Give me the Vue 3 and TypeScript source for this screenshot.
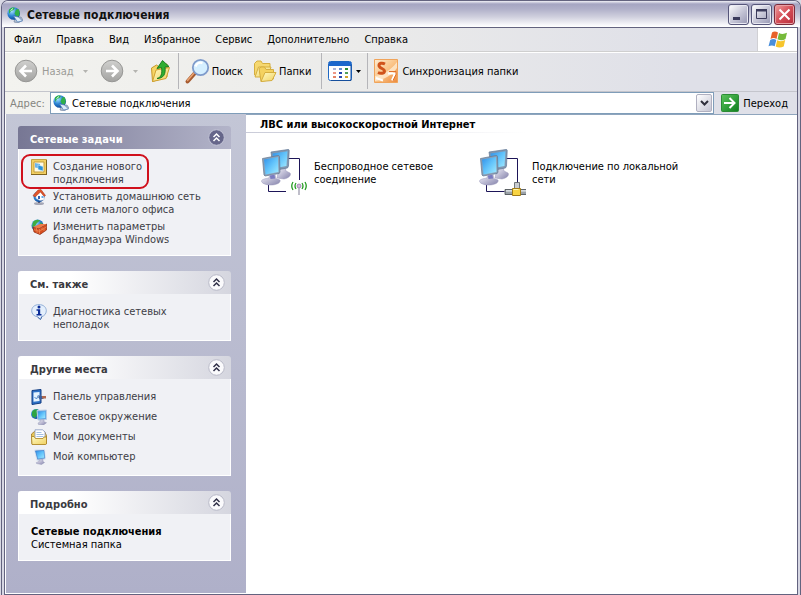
<script setup lang="ts">
import { ref } from 'vue'

interface Task { icon: string; text: string }
interface Panel { title: string; primary?: boolean; tasks: Task[]; marked?: number }

const menu: string[] = ['Файл', 'Правка', 'Вид', 'Избранное', 'Сервис', 'Дополнительно', 'Справка']
const address = ref('Сетевые подключения')

const panels: Panel[] = [
  {
    title: 'Сетевые задачи',
    primary: true,
    marked: 0,
    tasks: [
      { icon: 'wizard', text: 'Создание нового\nподключения' },
      { icon: 'home', text: 'Установить домашнюю сеть\nили сеть малого офиса' },
      { icon: 'firewall', text: 'Изменить параметры\nбрандмауэра Windows' },
    ],
  },
  { title: 'См. также', tasks: [{ icon: 'info', text: 'Диагностика сетевых\nнеполадок' }] },
  {
    title: 'Другие места',
    tasks: [
      { icon: 'control', text: 'Панель управления' },
      { icon: 'places', text: 'Сетевое окружение' },
      { icon: 'documents', text: 'Мои документы' },
      { icon: 'computer', text: 'Мой компьютер' },
    ],
  },
  { title: 'Подробно', tasks: [] },
]

const connections: Task[] = [
  { icon: 'wireless', text: 'Беспроводное сетевое\nсоединение' },
  { icon: 'lan', text: 'Подключение по локальной\nсети' },
]
</script>

<template>
  <div class="window">
    <svg class="defs" aria-hidden="true">
      <defs>
        <linearGradient id="screen" x1="0" y1="0" x2="1" y2="1">
          <stop offset="0" stop-color="#2f8fe8" /><stop offset=".5" stop-color="#63c4fb" /><stop offset="1" stop-color="#a5ecff" />
        </linearGradient>
        <linearGradient id="stand" x1="0" y1="0" x2="1" y2="1">
          <stop offset="0" stop-color="#f4f3fa" /><stop offset="1" stop-color="#8583ac" />
        </linearGradient>
        <radialGradient id="globeFill" cx=".35" cy=".3" r=".8">
          <stop offset="0" stop-color="#a8e4ff" /><stop offset=".5" stop-color="#2a83d4" /><stop offset="1" stop-color="#0a3c8c" />
        </radialGradient>
        <linearGradient id="folderFill" x1="0" y1="0" x2="1" y2="1">
          <stop offset="0" stop-color="#fffbc4" /><stop offset="1" stop-color="#f0d060" />
        </linearGradient>
        <linearGradient id="greyBall" x1="0" y1="0" x2="0" y2="1">
          <stop offset="0" stop-color="#d0d0ce" /><stop offset="1" stop-color="#a3a3a1" />
        </linearGradient>
        <linearGradient id="greenFill" x1="0" y1="0" x2="1" y2="1">
          <stop offset="0" stop-color="#5cc45c" /><stop offset="1" stop-color="#0e7f1e" />
        </linearGradient>
        <linearGradient id="orangeFill" x1="0" y1="0" x2="1" y2="1">
          <stop offset="0" stop-color="#fdeed4" /><stop offset=".5" stop-color="#fac386" /><stop offset="1" stop-color="#ec8a3c" />
        </linearGradient>
      </defs>

      <symbol id="globe" viewBox="0 0 16 16">
        <path d="M8 11l6-1 2 3-5 3-4-1z" fill="#aebcd0" stroke="#6c7c98" stroke-width=".6" />
        <circle cx="6.700" cy="6.500" r="6.300" fill="url(#globeFill)" />
        <path d="M2 2.500C4 0 7 0 8 1L6.500 3 4 4 2 7zM9 2.500l2.500-.5C13 5 13 7 11.500 9.500L9 9 7.500 6.500z" fill="#2fb04a" />
        <path d="M3.500 3.500l2.500-2" stroke="#e0ffe4" />
        <path d="M6.500 9l5 1 4 4-5 1z" fill="#ddecfa" stroke="#507bb6" stroke-width=".7" />
      </symbol>

      <symbol id="wizard" viewBox="0 0 16 16">
        <path d="M.5.5h15v15H.5z" fill="#f2cf62" stroke="#c4a244" />
        <path d="M3 3h10v10H3z" fill="#fffbe4" stroke="#c39d3c" />
        <path d="M4 4l5 1v4.500l-5-1z" fill="#6db5ec" /><path d="M7 6l5 1.500v4.500L7 10.500z" fill="#2b92d8" stroke="#c8e8fc" stroke-width=".6" />
        <path d="M0 15.500h16M15.500 1v15" stroke="#806420" />
      </symbol>

      <symbol id="home" viewBox="0 0 16 16">
        <ellipse cx="8" cy="14.500" rx="5" ry="1.500" fill="#a5a7b6" />
        <path d="M7 11h2v3H7z" fill="#5a5c78" />
        <circle cx="8" cy="7.500" r="5.500" fill="url(#globeFill)" />
        <path d="M5 6l4-4 4 4.500V11L9 11.500 5 9.500z" fill="#fff" stroke="#a6b4cc" stroke-width=".5" />
        <path d="M2 6.500L7 1l3-.5 4.500 6-1.500.8L9.500 3 4 8z" fill="#e2552a" stroke="#a42c12" stroke-width=".5" />
        <path d="M7 7h2v3H7z" fill="#365fae" /><path d="M10.500 7h2v2h-2z" fill="#5fa8ea" />
      </symbol>

      <symbol id="firewall" viewBox="0 0 16 16">
        <circle cx="6.500" cy="6.500" r="6" fill="url(#globeFill)" />
        <path d="M2 3C4 .5 7 0 9 1.500L6 4 4 7 1 8zM9 3l3 2-2 2z" fill="#3fae42" />
        <path d="M2 8l6 1.500L15.500 5v6L9 15.500 3 13z" fill="#d74e20" stroke="#8b2409" stroke-width=".7" />
        <path d="M2 8l7-3 6.500 0L8 9.500z" fill="#ee7c48" />
        <path d="M3 10.700l5.500 1.600 7-4.500M8.500 10v5M5.500 9v2M6 11.500v2.500M11 8.500V11M13 9.500V12" stroke="#f09a68" stroke-width=".6" fill="none" />
      </symbol>

      <symbol id="info" viewBox="0 0 16 16">
        <path d="M8 .6c4.500 0 7.300 2.700 7.300 6.200 0 3-2 5.200-4.800 5.900L9.500 15.500 6.500 12.800C3 12.300.7 10 .7 6.800.7 3.300 3.500.6 8 .6z" fill="#e4effc" stroke="#91aed6" />
        <path d="M11 12.500l-1.500 3L6.500 13" fill="none" stroke="#4b71ac" />
        <circle cx="8" cy="3" r="1.500" fill="#0b2d98" />
        <path d="M5.500 5.200h3.700v4.800h1.300v1.500h-5V10h1.500V6.700H5.500z" fill="#0b2d98" />
      </symbol>

      <symbol id="control" viewBox="0 0 16 16">
        <path d="M1 1.500l9-1v13.500L1 15.500z" fill="#2e73c8" stroke="#123d82" />
        <path d="M2.500 3.500L8.500 3v9l-6 .8z" fill="#e5f3ff" />
        <path d="M3.500 8l2 2 2-4" stroke="#4e88cc" fill="none" />
        <path d="M7 8l3-3v2h2.500v3H10v2z" fill="#3e5f98" /><path d="M11 7h4v2.500h-4z" fill="#b06a50" />
      </symbol>

      <symbol id="places" viewBox="0 0 16 16">
        <circle cx="5" cy="5" r="5" fill="url(#globeFill)" />
        <path d="M1 2.500C3 0 6-.2 7 1L6 6 4 9 1 7z" fill="#2da443" />
        <path d="M6 1.500L15.500 1v9.500L7 11z" fill="#5fa4e1" stroke="#b8cbe4" />
        <path d="M7.200 2.800l7-.4v6.700l-6.500.6z" fill="url(#screen)" />
        <path d="M9 11l4-.3v2l2.500 1-3 2.300-5-.5-.5-1.500L9 13z" fill="url(#stand)" stroke="#8489ac" stroke-width=".4" />
      </symbol>

      <symbol id="documents" viewBox="0 0 16 16">
        <path d="M.5 5l3-2.500h10l2 4v8.500H1z" fill="#e9c95a" stroke="#9e7420" stroke-width=".8" />
        <path d="M4 .8h7.500L14 3v9H4z" fill="#fff" stroke="#8598c0" stroke-width=".8" />
        <path d="M5.500 3.500h5M5.500 5.500h7M5.500 7.500h7" stroke="#8db0dc" stroke-width=".8" />
        <path d="M.5 7.500H3l1.500 2h7.500l1-1.500h2.500v6.500l-1 1H1z" fill="url(#folderFill)" stroke="#aa8220" stroke-width=".8" />
      </symbol>

      <symbol id="computer" viewBox="0 0 16 16">
        <path d="M3.500 1l10-.5 1 9.500-8.500 1.500z" fill="#9fbadc" stroke="#dbe5f2" />
        <path d="M4.500 2l8.500-.5.700 7.500-7 1z" fill="url(#screen)" stroke="#3473c4" stroke-width=".5" />
        <path d="M8 11l4-.7v2.200l1.500 1-3 2-5-1-.2-1L8 12.500z" fill="url(#stand)" stroke="#8489ac" stroke-width=".4" />
      </symbol>

      <symbol id="monitors" viewBox="0 0 48 48">
        <path d="M19 20l6-1.500 1 3.500 4 2c1.500 2-1 5-6 6l-7-1z" fill="url(#stand)" stroke="#9795b8" stroke-width=".5" />
        <path d="M11 3L28 .5c1 0 1.300.4 1.200 1L28.500 17l-1 2-14 2.500z" fill="#8197b0" stroke="#627896" stroke-width=".7" />
        <path d="M12.500 4.500L27.500 2.200 26.500 17 13.500 19.500z" fill="url(#screen)" />
        <path d="M2.500 9.500L18 6.500c1 0 1.500.5 1.500 1.200L20 23l-.8 1.500L5 27l-1-1z" fill="#8c9fb4" stroke="#5e7590" stroke-width=".7" />
        <path d="M4 10.500l14-2.500L18.500 23 5.500 25.500z" fill="url(#screen)" />
        <path d="M9.500 26.500l5.500-1 .8 4 4.200 1.500c1 2.500-3 5-9 5s-9.500-2-9.500-4c0-1.500 4-2.500 7.500-3z" fill="url(#stand)" stroke="#9795b8" stroke-width=".5" />
        <path d="M9.800 26.500l4.700-.8.600 3.800-4.600.5z" fill="#7a7cc0" />
      </symbol>

      <symbol id="wireless" viewBox="0 0 48 48">
        <path d="M28 9.500h11.500V31M8.500 36v6.500h17.500" fill="none" stroke="#1d1558" />
        <use href="#monitors" width="48" height="48" />
        <circle cx="39" cy="37" r="2" fill="#d4b7dc" stroke="#8d6fa2" stroke-width=".7" />
        <path d="M39 39v7" stroke="#aaa8b8" stroke-width="1.500" />
        <path d="M36 34q-2 3 0 6M33 33q-2.500 4 0 8M42 34q2 3 0 6M45 33q2.500 4 0 8" fill="none" stroke="#249c22" stroke-width="1.300" />
      </symbol>

      <symbol id="lan" viewBox="0 0 48 48">
        <path d="M28 9.500h11.500V34M8.500 36v6.500h18" fill="none" stroke="#1d1558" />
        <use href="#monitors" width="48" height="48" />
        <path d="M36.500 33.500h5V40h-5z" fill="#c8ccd0" stroke="#555b60" stroke-width=".8" />
        <path d="M27 40.500h22v5H27z" fill="#9ba2a8" stroke="#42474c" stroke-width=".8" />
        <path d="M28 41.800h7m8 0h6" stroke="#e9edf0" stroke-width="1.200" />
        <path d="M34.500 39.500h8v7h-8z" fill="#f8d443" stroke="#a27b14" /><path d="M35.500 40.500h5" stroke="#fff6b0" />
      </symbol>
    </svg>

    <header class="titlebar">
      <svg class="i16"><use href="#globe" /></svg>
      <h1>Сетевые подключения</h1>
      <button class="ctl" aria-label="Свернуть"><svg viewBox="0 0 19 19"><path d="M4 12h7v3H4z" fill="#3b3b5c" /></svg></button>
      <button class="ctl" aria-label="Развернуть"><svg viewBox="0 0 19 19"><path d="M4.500 5.500h10v8h-10z" fill="none" stroke="#3b3b5c" /><path d="M4 4h11v2.500H4z" fill="#3b3b5c" /></svg></button>
      <button class="ctl close" aria-label="Закрыть"><svg viewBox="0 0 19 19"><path d="M4.500 4.500l10 10M14.500 4.500l-10 10" stroke="#fff" stroke-width="2" /></svg></button>
    </header>

    <div class="frame">
      <nav class="menubar">
        <button v-for="m in menu" :key="m">{{ m }}</button>
        <span class="flag">
          <svg width="20" height="18" viewBox="0 0 20 18">
            <path d="M4 1.500C6 .2 8 .4 10 1.600L8.500 8C6.500 6.800 4.500 6.800 2.500 8z" fill="#e8622a" />
            <path d="M11 2c2 1.200 5 1.300 8-.2L17.500 8c-2.500 1.500-5 1.500-8 .3z" fill="#76ba3a" />
            <path d="M2.200 9c2-1.200 4.200-1.200 6.100 0l-1.600 6.300c-1.800-1.200-4-1.200-6.200 0z" fill="#4a8fdc" />
            <path d="M9.200 9.300c2.500 1.200 5.300 1.200 8-.2l-1.500 6.300c-2.500 1.500-5.500 1.500-8 .2z" fill="#f7c52c" />
          </svg>
        </span>
      </nav>

      <div class="toolbar">
        <button class="tool" disabled>
          <svg width="24" height="24" viewBox="0 0 24 24">
            <circle cx="12" cy="12" r="10.800" fill="url(#greyBall)" stroke="#979795" />
            <path d="M18 12H7.500M12 6.500L6.500 12l5.500 5.500" fill="none" stroke="#fff" stroke-width="2.600" />
          </svg>
          Назад
        </button>
        <button class="drop" disabled aria-label="Список назад"><svg width="5" height="3"><path d="M0 0h5L2.500 3z" fill="#b4b4b0" /></svg></button>
        <button class="tool" disabled aria-label="Вперед">
          <svg width="24" height="24" viewBox="0 0 24 24">
            <circle cx="12" cy="12" r="10.800" fill="url(#greyBall)" stroke="#979795" />
            <path d="M6 12h10.500M12 6.500l5.500 5.500-5.500 5.500" fill="none" stroke="#fff" stroke-width="2.600" />
          </svg>
        </button>
        <button class="drop" disabled aria-label="Список вперед"><svg width="5" height="3"><path d="M0 0h5L2.500 3z" fill="#b4b4b0" /></svg></button>
        <button class="tool" aria-label="Вверх">
          <svg width="22" height="24" viewBox="1 0 22 24">
            <path d="M2.500 9l5-3 2 1.500L18 5v13L3.500 22.500z" fill="#f6d565" stroke="#c69828" />
            <path d="M3.500 22.500L7 11l13.500-2.500L17 19.500z" fill="url(#folderFill)" stroke="#cfa02e" />
            <path d="M8 19.500c4-1 5.500-4.500 4.500-11L8 9.500 13.500 1.500l6.500 6-4 .5c1 7-1.500 11.500-8 11.500z" fill="#2fae30" stroke="#15771c" stroke-width=".9" />
          </svg>
        </button>
        <span class="sep"></span>
        <button class="tool search">
          <svg width="25" height="26" viewBox="0 0 25 26">
            <path d="M10 15L2.500 23.500" stroke="#a65b30" stroke-width="4" stroke-linecap="round" />
            <path d="M9 15L2.500 22.500" stroke="#e9a271" stroke-width="1.600" stroke-linecap="round" />
            <circle cx="15.500" cy="9.500" r="7.700" fill="#d5efff" stroke="#7f9bcb" stroke-width="1.800" />
            <path d="M10.500 8.500c1-3 4-4.500 7-3.500" fill="none" stroke="#fff" stroke-width="2.500" />
          </svg>
          Поиск
        </button>
        <button class="tool folders">
          <svg width="24" height="24" viewBox="0 0 24 24">
            <path d="M1.500 4.500L4 2h4l1.500 2.500H17v13H4L1.500 16z" fill="#f6d870" stroke="#d5ae40" />
            <path d="M2 18L5.500 8H18l-3 10z" fill="url(#folderFill)" stroke="#d5ae40" />
            <path d="M6 9.500l2-1.500h3.500l1.500 2.500h7.500V20L8 22.500z" fill="#f4d260" stroke="#d5ae40" />
            <path d="M8 22.500L12 13.500h11L19 21.500z" fill="url(#folderFill)" stroke="#d5ae40" />
          </svg>
          Папки
        </button>
        <span class="sep"></span>
        <button class="tool views" aria-label="Вид">
          <svg width="24" height="20" viewBox="0 0 24 20">
            <rect x=".5" y=".5" width="23" height="19" rx="2" fill="#fff" stroke="#1e68c4" />
            <path d="M1 1h22v4H1z" fill="#1c67cc" /><path d="M23 4v15.500H3" stroke="#164f9c" fill="none" />
            <path d="M5 7h3v2H5z" fill="#acb4d8" /><path d="M11 7h3v2h-3z" fill="#688ed0" /><path d="M17 7h3v2h-3z" fill="#2f8e3a" />
            <path d="M5 11h3v2H5z" fill="#ee9886" /><path d="M11 11h3v2h-3z" fill="#2344b2" /><path d="M17 11h3v2h-3z" fill="#52a058" />
            <path d="M5 15h3v2H5z" fill="#e48466" /><path d="M11 15h3v2h-3z" fill="#344cae" /><path d="M17 15h3v2h-3z" fill="#d7a52c" />
          </svg>
          <svg width="5" height="3"><path d="M0 0h5L2.500 3z" fill="#000" /></svg>
        </button>
        <span class="sep"></span>
        <button class="tool sync">
          <svg width="24" height="24" viewBox="0 0 24 24">
            <path d="M.5.500h23v23H.500z" fill="url(#orangeFill)" stroke="#f0a45b" />
            <path d="M1 17c8-1 15-5 22-14v6C18 16 10 21 1 22z" fill="#fff0d8" opacity=".75" />
            <path d="M11 5C8 3.500 5 4.200 5 6.500c0 3 5.500 3 5.500 5.500 0 2.400-3.500 2.900-6.500 1.500" fill="none" stroke="#d0541c" stroke-width="3" />
            <path d="M14 14.500h7l-3 7M2 19l7 2.500" fill="none" stroke="#fff" stroke-width="2" />
            <path d="M15 12.500h7v3l-3 6" fill="none" stroke="#e2702a" />
          </svg>
          Синхронизация папки
        </button>
      </div>

      <div class="addressbar">
        <label for="address">Адрес:</label>
        <div class="combo">
          <svg class="i16"><use href="#globe" /></svg>
          <input id="address" v-model="address" type="text" />
          <button aria-label="Открыть список"><svg width="9" height="6" viewBox="0 0 9 6"><path d="M1 1l3.500 3.500L8 1" fill="none" stroke="#30303c" stroke-width="2" /></svg></button>
        </div>
        <button class="go">
          <svg width="18" height="18" viewBox="0 0 18 18">
            <rect x=".5" y=".5" width="17" height="17" rx="1" fill="url(#greenFill)" stroke="#2c8c36" />
            <path d="M3 9h10M8.500 4l5 5-5 5" fill="none" stroke="#fff" stroke-width="2" />
          </svg>
          Переход
        </button>
      </div>

      <div class="body">
        <aside>
          <section v-for="p in panels" :key="p.title" class="panel" :class="{ primary: p.primary }">
            <header>
              <h2>{{ p.title }}</h2>
              <button :aria-label="'Свернуть: ' + p.title">
                <svg width="17" height="17" viewBox="0 0 17 17">
                  <circle class="disc" cx="8.500" cy="8.500" r="7.800" />
                  <path class="chev" d="M5.500 8L8.500 5l3 3M5.500 12l3-3 3 3" />
                </svg>
              </button>
            </header>
            <div class="content">
              <ul v-if="p.tasks.length">
                <li v-for="(t, i) in p.tasks" :key="t.text" :class="{ marked: p.marked === i }">
                  <a href="#"><svg class="i16"><use :href="'#' + t.icon" /></svg><span>{{ t.text }}</span></a>
                </li>
              </ul>
              <p v-else class="details"><strong>Сетевые подключения</strong><br />Системная папка</p>
            </div>
          </section>
        </aside>
        <main>
          <h2>ЛВС или высокоскоростной Интернет</h2>
          <div class="grid">
            <a v-for="c in connections" :key="c.text" href="#">
              <svg width="48" height="48"><use :href="'#' + c.icon" /></svg>
              <span>{{ c.text }}</span>
            </a>
          </div>
        </main>
      </div>
    </div>
  </div>
</template>

<style>
body { background: #d9d9e4; }
</style>

<style scoped>
* { box-sizing: border-box; }
.window {
  display: flex; flex-direction: column; min-height: 100vh; margin-left: 1px;
  border: solid #63637f; border-width: 1px 1px 0; border-radius: 7px 7px 0 0;
  background: #d6d6e2; overflow: hidden;
  font: 11px/13px "DejaVu Sans Condensed", "DejaVu Sans", sans-serif; color: #000;
}
.defs { position: absolute; width: 0; height: 0; }
svg { display: block; flex: none; overflow: visible; }
h1, h2, p, ul { margin: 0; padding: 0; }
ul { list-style: none; }
button { font: inherit; color: inherit; background: none; border: 0; padding: 0; }
a { color: inherit; text-decoration: none; }
.i16 { width: 16px; height: 16px; }

.titlebar {
  display: flex; align-items: center; gap: 2px; height: 26px; padding: 1px 5px 0 5px;
  background: linear-gradient(#f0f0f6 0, #a5a5c2 3px, #b0b0c9 8px, #d0d0de 16px, #f8f8fb 24px, #fff);
}
.titlebar h1 { flex: 1; margin-left: 2px; padding-top: 1px; font-size: 12px; line-height: 16px; font-weight: bold; color: #111; }
.ctl {
  width: 21px; height: 21px; border: 1px solid #56567a; border-radius: 3px;
  background: linear-gradient(135deg, #fff, #c8c8d8 50%, #9696b2); box-shadow: inset 0 0 0 1px #e9e9f2;
}
.ctl svg { width: 19px; height: 19px; }
.ctl.close { border-color: #7c2b3a; background: linear-gradient(135deg, #f0a0a0, #d44d56 50%, #b82c3c); box-shadow: inset 0 0 0 1px #e8a0a4; }

.frame {
  flex: 1; display: flex; flex-direction: column; margin: 0 2px;
  border: 1px solid #63637f; background: #fff;
}
.menubar, .toolbar, .addressbar { display: flex; align-items: center; background: linear-gradient(90deg, #f3f3ef, #ebebea 45%, #dfe0e8 85%); }
.menubar { height: 24px; padding-left: 9px; border-bottom: 1px solid #cfcfcf; gap: 15px; }
.flag { display: flex; align-items: center; justify-content: center; width: 40px; height: 23px; margin-left: auto; background: #fff; border-left: 1px solid #d0d0d4; }
.toolbar { height: 40px; padding: 0 9px 2px; border-top: 1px solid #fff; border-bottom: 1px solid #c4c5cc; }
.tool { display: flex; align-items: center; gap: 4px; }
.tool:disabled { color: #9b9b97; }
.drop { margin: 0 12px 0 9px; }
.sep { width: 1px; height: 36px; margin: 0 6px; background: #b5b5b9; }
.search { gap: 2px; margin-right: 10px; }
.folders { gap: 2px; margin-right: 4px; }

.addressbar { height: 22px; padding-right: 9px; }
.addressbar label { width: 45px; padding-left: 5px; color: #858580; }
.combo { flex: 1; display: flex; align-items: center; height: 22px; padding-left: 2px; background: #fff; border: 1px solid #7f9db9; }
.combo input { flex: 1; min-width: 0; height: 18px; margin-left: 3px; padding: 1px 0 0; border: 0; outline: 0; background: none; font: inherit; color: inherit; }
.combo button { display: flex; align-items: center; justify-content: center; width: 16px; height: 18px; margin-right: 1px; border: 1px solid #b0b0c0; border-radius: 2px; background: linear-gradient(135deg, #fff, #c6c6d4); }
.go { display: flex; align-items: center; gap: 4px; margin-left: 7px; }

.body { flex: 1; display: flex; }
aside {
  display: flex; flex-direction: column; gap: 15px; width: 241px; flex: none; padding: 12px 15px 15px 12px;
  background: linear-gradient(#c3c6d6, #afb0c9); border: 1px solid #fff; border-width: 0 0 1px 1px;
}
.panel header {
  display: flex; align-items: center; justify-content: space-between; height: 23px; padding: 0 6px 0 12px;
  border-radius: 3px 3px 0 0; background: linear-gradient(90deg, #fff 25%, #d5d6df); color: #3a3a3f;
}
.panel h2 { font-size: 11px; line-height: 13px; padding-top: 3px; }
.primary header { background: linear-gradient(90deg, #777794, #b3b4c9); color: #fff; }
.disc { fill: #fafafc; stroke: #b9bac8; }
.chev { fill: none; stroke: #303048; stroke-width: 1.500; }
.primary .disc { fill: #66668a; stroke: #c4c5d7; }
.primary .chev { stroke: #fff; }
.content { padding: 10px 12px 9px; background: #f0f1f5; border: 1px solid #fff; border-top: 0; }
.content ul { display: flex; flex-direction: column; gap: 3px; }
.content li { position: relative; min-height: 17px; color: #3d3d46; }
.content a { display: flex; gap: 6px; }
.content span { padding-top: 1px; white-space: pre-line; }
.details { padding-top: 1px; }
.marked::after { content: ""; position: absolute; inset: -5px 69px -3px -10px; border: 2px solid #d0101c; border-radius: 9px; pointer-events: none; }

main { flex: 1; min-width: 0; background: #fff; border-top: 1px solid #8fa5bd; }
main h2 {
  height: 18px; padding: 3px 13px 0 14px; font-size: 11px; line-height: 13px;
  border-bottom: 1px solid; border-image: linear-gradient(90deg, #c9cbd8, #fff 280px) 1;
}
.grid { display: grid; grid-template-columns: repeat(auto-fill, 218px); padding: 16px 0 15px 14px; }
.grid a { display: flex; align-items: center; gap: 6px; }
.grid span { white-space: pre-line; }
</style>
